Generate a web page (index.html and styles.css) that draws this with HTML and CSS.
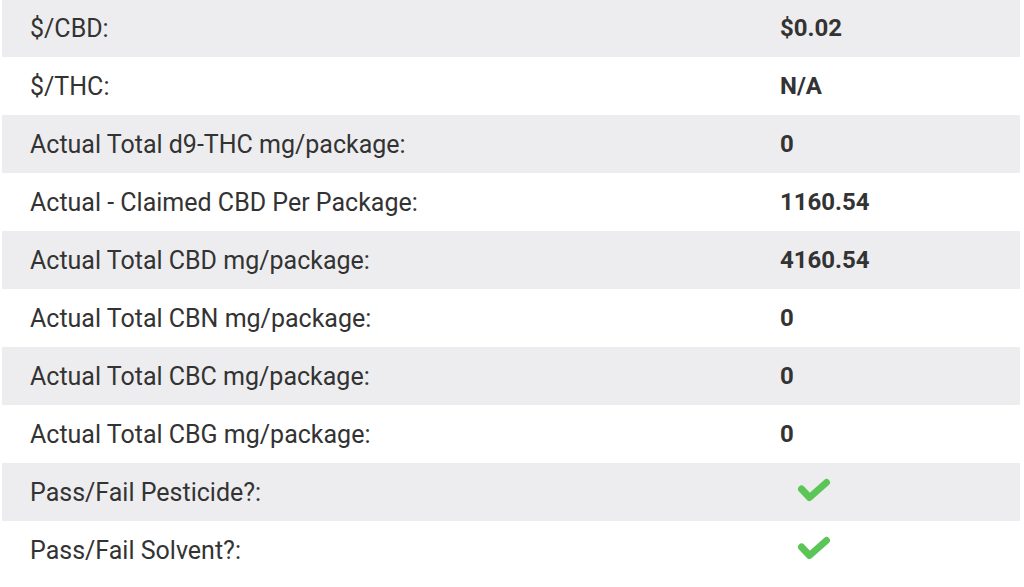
FILE: index.html
```html
<!DOCTYPE html>
<html>
<head>
<meta charset="utf-8">
<link rel="stylesheet" href="styles.css">
</head>
<body>
<div class="table">
  <div class="row alt"><div class="label">$/CBD:</div><div class="value">$0.02</div></div>
  <div class="row"><div class="label">$/THC:</div><div class="value">N/A</div></div>
  <div class="row alt"><div class="label">Actual Total d9-THC mg/package:</div><div class="value">0</div></div>
  <div class="row"><div class="label">Actual - Claimed CBD Per Package:</div><div class="value">1160.54</div></div>
  <div class="row alt"><div class="label">Actual Total CBD mg/package:</div><div class="value">4160.54</div></div>
  <div class="row"><div class="label">Actual Total CBN mg/package:</div><div class="value">0</div></div>
  <div class="row alt"><div class="label">Actual Total CBC mg/package:</div><div class="value">0</div></div>
  <div class="row"><div class="label">Actual Total CBG mg/package:</div><div class="value">0</div></div>
  <div class="row alt"><div class="label">Pass/Fail Pesticide?:</div><div class="value"><svg class="check" width="34" height="26" viewBox="0 0 34 26"><polyline points="4.5,11 12.5,19.5 29.5,4.5" fill="none" stroke="#5bc657" stroke-width="7" stroke-linecap="round" stroke-linejoin="round"/></svg></div></div>
  <div class="row"><div class="label">Pass/Fail Solvent?:</div><div class="value"><svg class="check" width="34" height="26" viewBox="0 0 34 26"><polyline points="4.5,11 12.5,19.5 29.5,4.5" fill="none" stroke="#5bc657" stroke-width="7" stroke-linecap="round" stroke-linejoin="round"/></svg></div></div>
</div>
</body>
</html>
```

FILE: styles.css
```css
html, body {
  margin: 0;
  padding: 0;
  background: #ffffff;
}
body {
  font-family: Roboto, "Liberation Sans", Arial, sans-serif;
  color: #333333;
  overflow: hidden;
}
.table {
  margin: -1px 4px 0 2px;
  display: flex;
  flex-direction: column;
}
.row {
  display: grid;
  grid-template-columns: 750px 1fr;
  align-items: center;
  height: 58px;
  padding-left: 28px;
  font-size: 25px;
}
.alt {
  background: #ededef;
}
.value {
  font-size: 24px;
  font-weight: 700;
  display: flex;
  align-items: center;
}
.check {
  display: block;
  margin-left: 17px;
  margin-top: -2px;
}
```
